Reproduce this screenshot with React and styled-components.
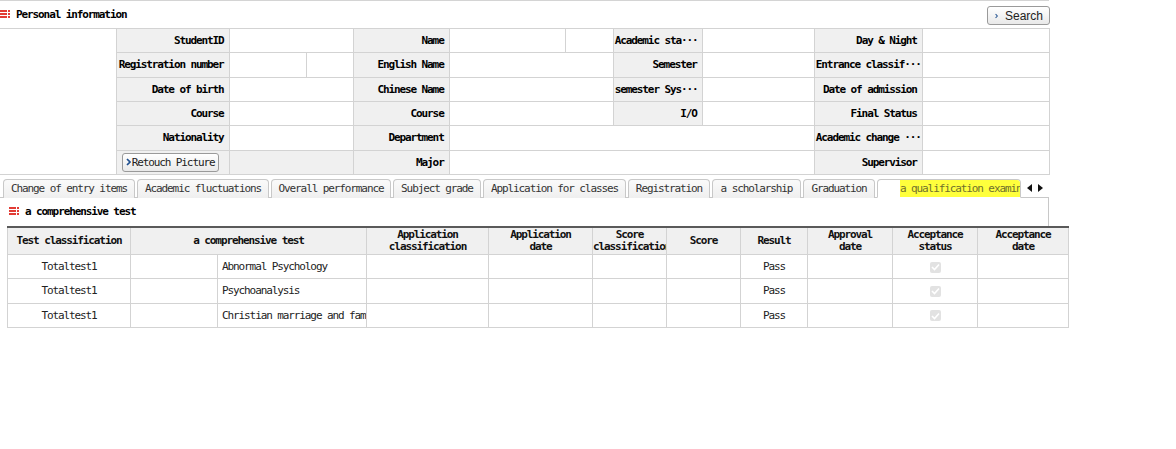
import React from 'react';
import styled, { createGlobalStyle } from 'styled-components';

const Global = createGlobalStyle`
  html, body { margin: 0; padding: 0; background: #fff; }
  body {
    font-family: "DejaVu Sans Mono", "Liberation Mono", monospace;
    font-size: 11px;
    letter-spacing: -1.1px;
    color: #000;
  }
`;

const Page = styled.div`
  width: 1176px;
  height: 449px;
  overflow: hidden;
`;

const TopBar = styled.div`
  width: 1049px;
  height: 27px;
  border-top: 1px solid #d4d4d4;
  display: flex;
  align-items: center;
  justify-content: space-between;
`;

const Title = styled.div`
  display: flex;
  align-items: center;
  gap: 6px;
  font-weight: bold;
  padding-left: ${p => p.$indent || 0}px;
  padding-bottom: 1px;
`;

const Btn = styled.button`
  display: inline-flex;
  align-items: center;
  gap: ${p => p.$gap || 3}px;
  height: ${p => p.$h || 19}px;
  padding: 0 ${p => p.$pad || 6}px 0 ${p => p.$padL || 5}px;
  border: 1px solid #9a9a9a;
  border-radius: 3px;
  background: linear-gradient(#ffffff, #e9e9e9);
  font-family: inherit;
  font-size: 11px;
  letter-spacing: -1.1px;
  color: #222;
  cursor: pointer;
`;

const SearchBtn = styled(Btn)`
  margin-right: -1px;
  margin-top: 2px;
  font-family: "Liberation Sans", Arial, sans-serif;
  letter-spacing: 0;
  font-size: 12px;
  width: 63px;
`;

const InfoTable = styled.table`
  border-collapse: collapse;
  table-layout: fixed;
  width: 1050px;
  td, th {
    border: 1px solid #d3d3d3;
    height: 23.34px;
    padding: 0;
    white-space: nowrap;
    overflow: hidden;
  }
`;

const Label = styled.th`
  background: #f0f0f0;
  text-align: ${p => p.$align || 'right'};
  padding: 0 5px 0 1px !important;
  font-weight: bold;
`;

const Value = styled.td`
  background: #fff;
`;

const Photo = styled.td`
  background: #fff;
  border-left: none !important;
`;

const TabStrip = styled.div`
  display: flex;
  align-items: flex-end;
  gap: 2px;
  width: 1046px;
  height: 19px;
  margin-top: 3px;
  padding-left: 3px;
  border-bottom: 1px solid #c8c8c8;
`;

const Tab = styled.div`
  box-sizing: border-box;
  width: ${p => p.$w}px;
  height: 19px;
  margin-bottom: -1px;
  border: 1px solid #c8c8c8;
  border-bottom: ${p => (p.$active ? '1px solid #fff' : 'none')};
  border-radius: 4px 4px 0 0;
  background: ${p => (p.$active ? '#fff' : 'linear-gradient(#fafafa, #efefef)')};
  color: #333;
  white-space: nowrap;
  overflow: hidden;
  display: flex;
  align-items: center;
  justify-content: ${p => (p.$active ? 'flex-start' : 'center')};
  padding-left: ${p => (p.$active ? 22 : 0)}px;
`;

const Highlight = styled.span`
  background: #ffff3c;
  color: #6f6f2c;
  padding: 2px 0;
`;

const Arrows = styled.div`
  display: flex;
  align-items: center;
  gap: 6px;
  height: 18px;
  margin-left: 4px;
`;

const PanelHead = styled.div`
  width: 1048px;
  height: 28px;
  border-right: 1px solid #c8c8c8;
  display: flex;
  align-items: center;
`;

const Grid = styled.table`
  margin-left: 7px;
  border-collapse: collapse;
  table-layout: fixed;
  width: 1062px;
  border-top: 2px solid #5a5a5a;
  th, td {
    border: 1px solid #d3d3d3;
    padding: 0;
    white-space: nowrap;
    overflow: hidden;
  }
  thead th { border-top: 2px solid #5a5a5a; }
`;

const HeadCell = styled.th`
  background: #f0f0f0;
  height: 26px;
  font-weight: bold;
  line-height: 12px;
  text-align: center;
  color: #111;
`;

const BodyCell = styled.td`
  height: 23.34px;
  text-align: ${p => p.$align || 'center'};
  padding-left: ${p => (p.$align === 'left' ? 4 : 0)}px !important;
  color: #222;
`;

const Check = styled.span`
  display: inline-flex;
  align-items: center;
  justify-content: center;
  width: 11px;
  height: 11px;
  border-radius: 2px;
  background: #e2e2e2;
  vertical-align: middle;
`;

const ListIcon = () => (
  <svg width="10" height="9" viewBox="0 0 10 9">
    {[1, 4, 7].map(y => (
      <g key={y} fill="#e23b34">
        <rect x="0" y={y - 1} width="7" height="2" />
        <rect x="8" y={y - 1} width="2" height="2" />
      </g>
    ))}
  </svg>
);

const Chevron = () => (
  <svg width="5" height="8" viewBox="0 0 5 8">
    <path d="M1 1 L4 4 L1 7" fill="none" stroke="#1f4f8f" strokeWidth="1.7" />
  </svg>
);

const tabs = [
  ['Change of entry items', 132],
  ['Academic fluctuations', 132],
  ['Overall performance', 120],
  ['Subject grade', 88],
  ['Application for classes', 143],
  ['Registration', 82],
  ['a scholarship', 89],
  ['Graduation', 72],
];

const cols = [123, 87, 149, 122, 104, 74, 74, 67, 85, 85, 91];
const infoCols = [116, 113, 77, 47, 96, 116, 48, 89, 112, 108, 127];
const rows = ['Abnormal Psychology', 'Psychoanalysis', 'Christian marriage and family'];

export default function App() {
  return (
    <Page>
      <Global />
      <TopBar>
        <Title>
          <ListIcon />
          Personal information
        </Title>
        <SearchBtn $padL={7} $gap={7}>
          <Chevron />
          Search
        </SearchBtn>
      </TopBar>

      <InfoTable>
        <colgroup>
          {infoCols.map((w, i) => <col key={i} style={{ width: w }} />)}
        </colgroup>
        <tbody>
          <tr>
            <Photo rowSpan={6} />
            <Label>StudentID</Label>
            <Value colSpan={2} />
            <Label>Name</Label>
            <Value />
            <Value />
            <Label>Academic sta···</Label>
            <Value />
            <Label>Day &amp; Night</Label>
            <Value />
          </tr>
          <tr>
            <Label>Registration number</Label>
            <Value />
            <Value />
            <Label>English Name</Label>
            <Value colSpan={2} />
            <Label>Semester</Label>
            <Value />
            <Label>Entrance classif···</Label>
            <Value />
          </tr>
          <tr>
            <Label>Date of birth</Label>
            <Value colSpan={2} />
            <Label>Chinese Name</Label>
            <Value colSpan={2} />
            <Label>semester Sys···</Label>
            <Value />
            <Label>Date of admission</Label>
            <Value />
          </tr>
          <tr>
            <Label>Course</Label>
            <Value colSpan={2} />
            <Label>Course</Label>
            <Value colSpan={2} />
            <Label>I/O</Label>
            <Value />
            <Label>Final Status</Label>
            <Value />
          </tr>
          <tr>
            <Label>Nationality</Label>
            <Value colSpan={2} />
            <Label>Department</Label>
            <Value colSpan={4} />
            <Label>Academic change ···</Label>
            <Value />
          </tr>
          <tr>
            <Label $align="center">
              <Btn $h={19} $pad={4} $padL={3} $gap={1}>
                <Chevron />
                Retouch Picture
              </Btn>
            </Label>
            <Label colSpan={2} />
            <Label>Major</Label>
            <Value colSpan={4} />
            <Label>Supervisor</Label>
            <Value />
          </tr>
        </tbody>
      </InfoTable>

      <TabStrip>
        {tabs.map(([t, w]) => (
          <Tab key={t} $w={w}>{t}</Tab>
        ))}
        <Tab $w={144} $active>
          <Highlight>a qualification examination</Highlight>
        </Tab>
        <Arrows>
          <svg width="5" height="8" viewBox="0 0 5 8"><path d="M5 0 L0 4 L5 8 Z" fill="#111" /></svg>
          <svg width="5" height="8" viewBox="0 0 5 8"><path d="M0 0 L5 4 L0 8 Z" fill="#111" /></svg>
        </Arrows>
      </TabStrip>

      <PanelHead>
        <Title $indent={9}>
          <ListIcon />
          a comprehensive test
        </Title>
      </PanelHead>

      <Grid>
        <colgroup>
          {cols.map((w, i) => <col key={i} style={{ width: w }} />)}
        </colgroup>
        <thead>
          <tr>
            <HeadCell>Test classification</HeadCell>
            <HeadCell colSpan={2}>a comprehensive test</HeadCell>
            <HeadCell>Application<br />classification</HeadCell>
            <HeadCell>Application<br />date</HeadCell>
            <HeadCell>Score<br />classification</HeadCell>
            <HeadCell>Score</HeadCell>
            <HeadCell>Result</HeadCell>
            <HeadCell>Approval<br />date</HeadCell>
            <HeadCell>Acceptance<br />status</HeadCell>
            <HeadCell>Acceptance<br />date</HeadCell>
          </tr>
        </thead>
        <tbody>
          {rows.map(r => (
            <tr key={r}>
              <BodyCell>Totaltest1</BodyCell>
              <BodyCell />
              <BodyCell $align="left">{r}</BodyCell>
              <BodyCell />
              <BodyCell />
              <BodyCell />
              <BodyCell />
              <BodyCell>Pass</BodyCell>
              <BodyCell />
              <BodyCell>
                <Check>
                  <svg width="9" height="8" viewBox="0 0 9 8">
                    <path d="M1 4 L3.5 6.5 L8 1.5" fill="none" stroke="#fff" strokeWidth="1.6" />
                  </svg>
                </Check>
              </BodyCell>
              <BodyCell />
            </tr>
          ))}
        </tbody>
      </Grid>
    </Page>
  );
}
